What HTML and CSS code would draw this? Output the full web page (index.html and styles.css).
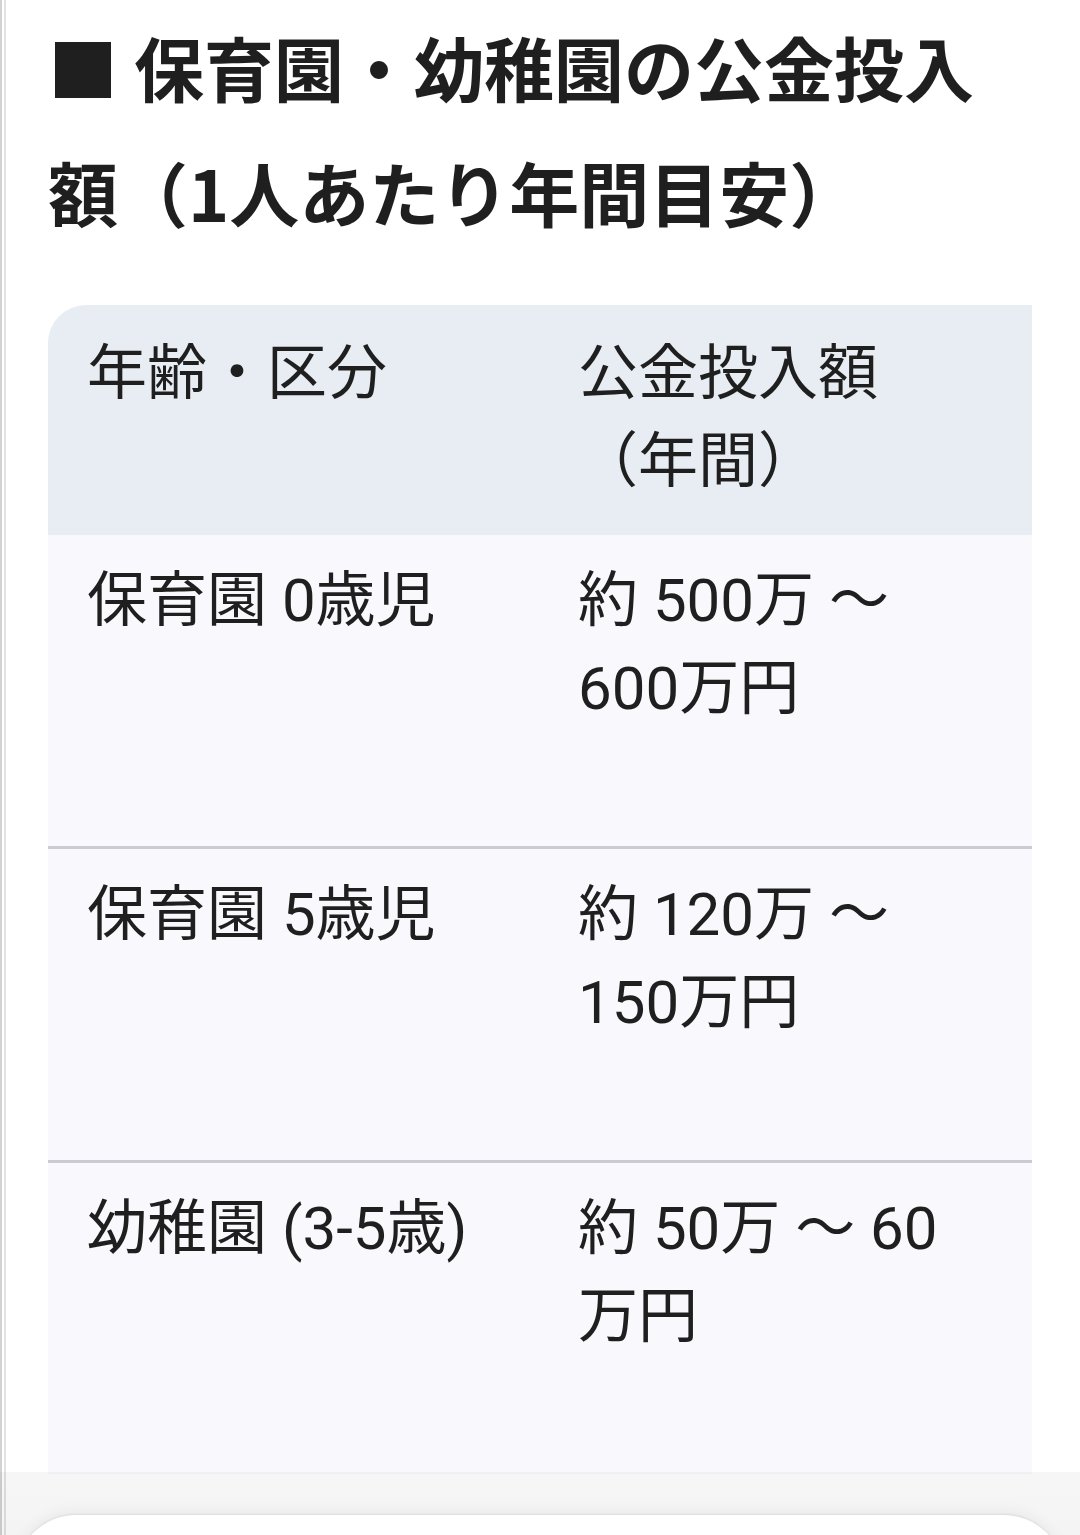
FILE: index.html
```html
<!DOCTYPE html>
<html lang="ja">
<head>
<meta charset="utf-8">
<title>保育園・幼稚園の公金投入額</title>
<link rel="stylesheet" href="styles.css">
</head>
<body>
<main class="article">
  <h2 class="title">■ 保育園・幼稚園の公金投入額（1人あたり年間目安）</h2>
  <div class="table-scroll">
    <table class="data">
      <thead>
        <tr><th class="c1">年齢・区分</th><th class="c2">公金投入額（年間）</th></tr>
      </thead>
      <tbody>
        <tr><td class="c1">保育園 0歳児</td><td class="c2">約 500万 〜 600万円</td></tr>
        <tr><td class="c1">保育園 5歳児</td><td class="c2">約 120万 〜 150万円</td></tr>
        <tr><td class="c1">幼稚園 (3-5歳)</td><td class="c2">約 50万 〜 60万円</td></tr>
      </tbody>
    </table>
  </div>
</main>
<div class="scrim">
  <div class="sheet"></div>
</div>
</body>
</html>
```
FILE: styles.css
```css
html, body {
  margin: 0;
  padding: 0;
}
body {
  height: 1535px;
  overflow: hidden;
  position: relative;
  background: linear-gradient(to right, #d2d2d2 0 2px, #ffffff 2px 4px, #e2e2e2 4px 6px, #ffffff 6px);
  color: #1f1f1f;
  font-family: "Roboto", "Noto Sans CJK JP", sans-serif;
}
.article {
  padding: 4px 48px 0 48px;
}
.title {
  margin: 0;
  font-family: "Noto Sans CJK JP", sans-serif;
  font-weight: 700;
  font-size: 70px;
  line-height: 125px;
  color: #1f1f1f;
  letter-spacing: 0;
}
.table-scroll {
  margin-top: 51px;
  overflow: hidden;
  border-top-left-radius: 38px;
}
.data {
  width: 100%;
  border-collapse: collapse;
  table-layout: fixed;
  font-size: 60px;
  line-height: 88px;
  font-weight: 400;
}
.data th {
  background: #e8ecf3;
  text-align: left;
  font-weight: 400;
  vertical-align: top;
  padding: 25px 39px 29px 39px;
}
.data td {
  background: #f8f8fd;
  vertical-align: top;
  padding: 22px 39px 113px 39px;
}
.data tbody tr + tr td {
  border-top: 3px solid #cbcbd4;
}
.data .c1 {
  width: 413px;
}
.data .c2 {
  padding-right: 70px;
}
.scrim {
  position: absolute;
  left: 0;
  right: 0;
  top: 1472px;
  bottom: 0;
  background: linear-gradient(to bottom, rgba(0,0,0,0.035), rgba(0,0,0,0.045));
}
.sheet {
  position: absolute;
  left: 16px;
  right: 16px;
  top: 43px;
  bottom: -40px;
  background: #ffffff;
  border-radius: 64px 64px 0 0;
  box-shadow: 0 -1px 2px rgba(0,0,0,0.07), 0 -4px 14px rgba(0,0,0,0.05);
}
```
